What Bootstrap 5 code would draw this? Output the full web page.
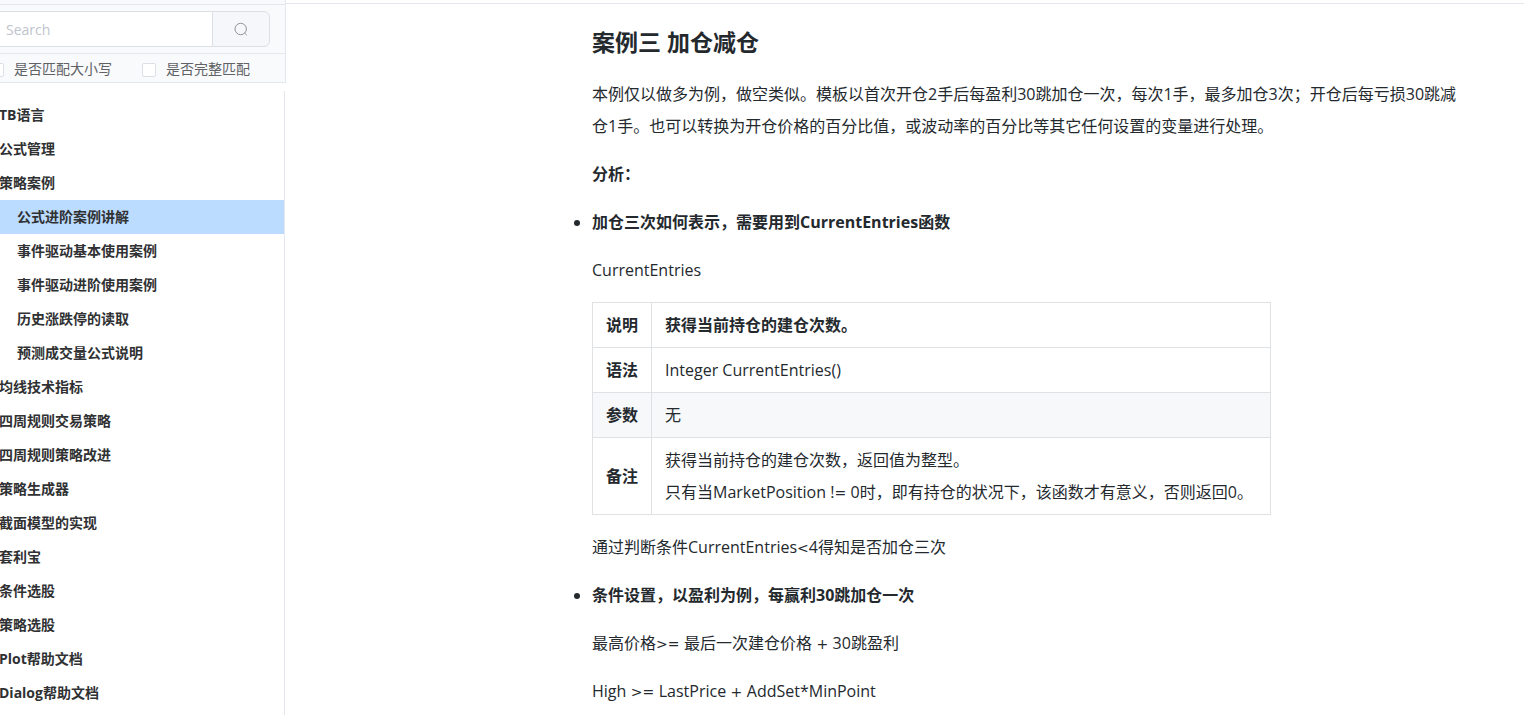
<!DOCTYPE html>
<html lang="zh-CN">
<head>
<meta charset="utf-8">
<meta name="viewport" content="width=device-width, initial-scale=1">
<title>案例三 加仓减仓</title>
<link href="https://cdn.jsdelivr.net/npm/bootstrap@5.3.0/dist/css/bootstrap.min.css" rel="stylesheet">
<style>
  body { font-family: "Open Sans", "Noto Sans CJK SC", sans-serif; color: #24292e; background: #fff; }
  .doc-side { width: 303px; margin-left: -17px; color: #606266; font-size: 14px; }
  .side-tools { background: #f9fafc; border-right: 1px solid #e4e7ed; padding-top: 4px; }
  .side-tools > * { border-top: 1px solid #e4e7ed; }
  .search-row { padding: 6px 15px 6px 7px; }
  .search-row .form-control, .search-row .btn { height: 36px; font-size: 14px; border-color: #dcdfe6; }
  .search-row .form-control { padding: 0 15px; }
  .search-row .form-control::placeholder { color: #c0c4cc; }
  .search-row .btn { width: 58px; background: #f5f7fa; color: #909399; }
  .match-row { height: 30px; padding-left: 7px; gap: 30px; border-bottom: 1px solid #e4e7ed; }
  .match-row label { gap: 10px; }
  .match-row .form-check-input { width: 14px; height: 14px; margin: 3px 0 0; border-color: #dcdfe6; border-radius: 2px; }
  .side-menu { margin: 8px 1px 0 0; padding-top: 7px; border-right: 1px solid #e4e7ed; }
  .side-menu a { display: block; line-height: 34px; padding-left: 16px; color: #303133; font-weight: 700; text-decoration: none; }
  .side-menu ul ul a { padding-left: 34px; }
  .side-menu a.active { background: #bbdcff; }
  .doc-main { margin-top: 3px; border-top: 1px solid #e4e7ed; }
  .doc-body { padding: 21px 58px 0 306px; line-height: 32px; }
  .doc-body h2 { font-size: 23px; line-height: 34px; font-weight: 700; margin-bottom: 19px; }
  .doc-body p { margin-bottom: 16px; }
  .doc-points { padding-left: 32px; margin-left: -32px; }
  .doc-body .fn-table { width: 679px; max-width: 100%; margin-bottom: 16px; border-color: #dfe2e5; color: #24292e; vertical-align: middle; }
  .fn-table th, .fn-table td { padding: 6px 13px; border: 1px solid #dfe2e5; }
  .fn-table th:first-child { width: 59px; white-space: nowrap; }
  .fn-table .shaded > * { background: #f6f8fa; }
  .math-op { font-family: "DejaVu Sans", sans-serif; font-size: 14px; line-height: 1; white-space: pre; }
</style>
</head>
<body>
<div class="d-flex vh-100 overflow-hidden">
  <aside class="doc-side flex-shrink-0 d-flex flex-column">
    <div class="side-tools">
      <form class="search-row">
        <div class="input-group">
          <input type="text" class="form-control" placeholder="Search" aria-label="Search">
          <button type="button" class="btn d-flex align-items-center justify-content-center" aria-label="搜索">
            <svg width="14" height="14" viewBox="0 0 14 14" fill="none" stroke="currentColor" stroke-width="1"><circle cx="6.7" cy="7" r="5.7"/><path d="M10.6 11 12.8 13.2"/></svg>
          </button>
        </div>
      </form>
      <div class="match-row d-flex align-items-center">
        <label class="d-flex align-items-center"><input type="checkbox" class="form-check-input">是否匹配大小写</label>
        <label class="d-flex align-items-center"><input type="checkbox" class="form-check-input">是否完整匹配</label>
      </div>
    </div>
    <nav class="side-menu flex-grow-1">
      <ul class="list-unstyled mb-0">
        <li><a href="#">TB语言</a></li>
        <li><a href="#">公式管理</a></li>
        <li><a href="#">策略案例</a>
          <ul class="list-unstyled">
            <li><a href="#" class="active">公式进阶案例讲解</a></li>
            <li><a href="#">事件驱动基本使用案例</a></li>
            <li><a href="#">事件驱动进阶使用案例</a></li>
            <li><a href="#">历史涨跌停的读取</a></li>
            <li><a href="#">预测成交量公式说明</a></li>
          </ul>
        </li>
        <li><a href="#">均线技术指标</a></li>
        <li><a href="#">四周规则交易策略</a></li>
        <li><a href="#">四周规则策略改进</a></li>
        <li><a href="#">策略生成器</a></li>
        <li><a href="#">截面模型的实现</a></li>
        <li><a href="#">套利宝</a></li>
        <li><a href="#">条件选股</a></li>
        <li><a href="#">策略选股</a></li>
        <li><a href="#">Plot帮助文档</a></li>
        <li><a href="#">Dialog帮助文档</a></li>
      </ul>
    </nav>
  </aside>
  <main class="doc-main flex-grow-1">
    <article class="doc-body">
      <h2>案例三 加仓减仓</h2>
      <p>本例仅以做多为例，做空类似。模板以首次开仓2手后每盈利30跳加仓一次，每次1手，最多加仓3次；开仓后每亏损30跳减仓1手。也可以转换为开仓价格的百分比值，或波动率的百分比等其它任何设置的变量进行处理。</p>
      <p><strong>分析：</strong></p>
      <ul class="doc-points">
        <li>
          <p><strong>加仓三次如何表示，需要用到CurrentEntries函数</strong></p>
          <p>CurrentEntries</p>
          <table class="fn-table">
            <thead>
              <tr><th>说明</th><th>获得当前持仓的建仓次数。</th></tr>
            </thead>
            <tbody>
              <tr><th>语法</th><td>Integer CurrentEntries()</td></tr>
              <tr class="shaded"><th>参数</th><td>无</td></tr>
              <tr><th>备注</th><td>获得当前持仓的建仓次数，返回值为整型。<br>只有当MarketPosition !<span class="math-op">= </span>0时，即有持仓的状况下，该函数才有意义，否则返回0。</td></tr>
            </tbody>
          </table>
          <p>通过判断条件CurrentEntries<span class="math-op">&lt;</span>4得知是否加仓三次</p>
        </li>
        <li>
          <p><strong>条件设置，以盈利为例，每赢利30跳加仓一次</strong></p>
          <p>最高价格<span class="math-op">&gt;= </span>最后一次建仓价格<span class="math-op"> + </span>30跳盈利</p>
          <p>High<span class="math-op"> &gt;= </span>LastPrice<span class="math-op"> + </span>AddSet*MinPoint</p>
        </li>
      </ul>
    </article>
  </main>
</div>
<script src="https://cdn.jsdelivr.net/npm/bootstrap@5.3.0/dist/js/bootstrap.bundle.min.js"></script>
</body>
</html>
